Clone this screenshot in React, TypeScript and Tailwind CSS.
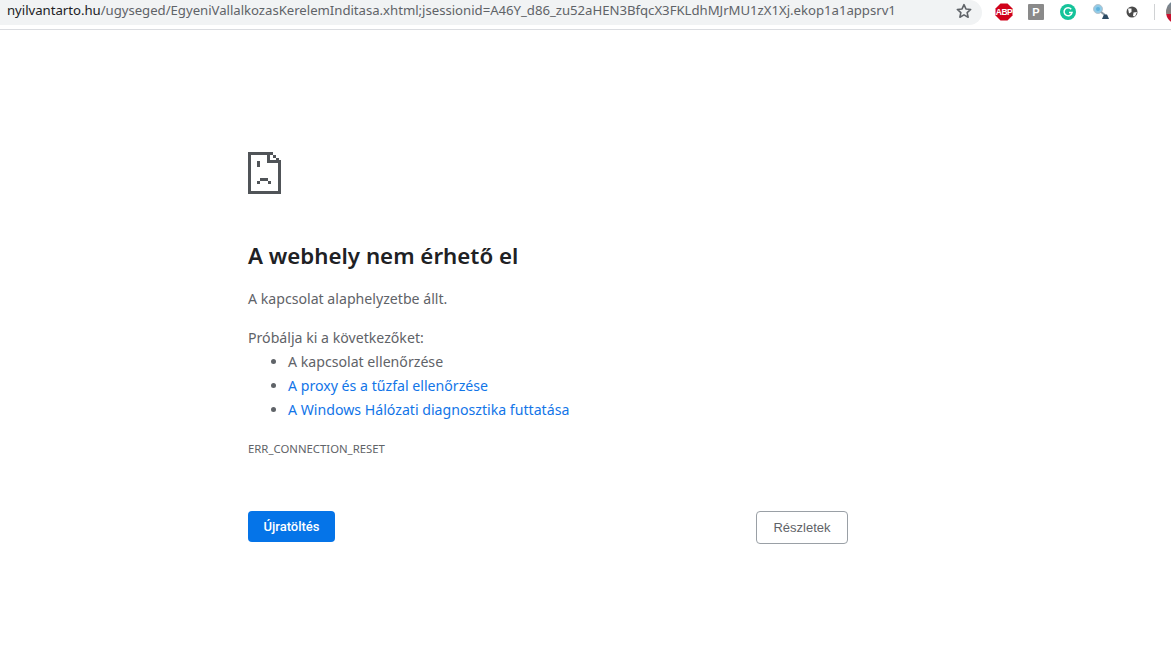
import React from "react";

const font = "font-['Noto_Sans','Open_Sans',sans-serif]";

function SadTab() {
  // pixel style sad page icon, 33x42 box
  return (
    <svg width="33" height="42" viewBox="0 0 33 42" fill="#505458" shapeRendering="crispEdges">
      <path d="M0 0H25V3H28V6H31V8H33V42H0ZM3 3V39H30V11H19V3ZM22 3V8H28V6H25V3Z" fillRule="evenodd" />
      <rect x="9" y="9" width="3" height="6" />
      <rect x="12" y="26" width="8" height="3" />
      <rect x="9" y="29" width="3" height="3" />
      <rect x="20" y="29" width="3" height="3" />
    </svg>
  );
}

function Extensions() {
  return (
    <div className="flex items-center">
      <svg width="18" height="18" viewBox="0 0 18 18" className="ml-[13px]">
        <path d="M5.5 0.5H12.5L17.5 5.5V12.5L12.5 17.5H5.5L0.5 12.5V5.5Z" fill="#d0021b" />
        <text x="9" y="12" textAnchor="middle" fontSize="8.5" fontWeight="700" letterSpacing="-0.5" fill="#fff" fontFamily="Liberation Sans">
          ABP
        </text>
      </svg>
      <div className="ml-[15px] flex h-4 w-4 items-center justify-center rounded-[1px] bg-[#8a8a8a] font-['Liberation_Sans',sans-serif] text-[11px] font-bold text-white">
        P
      </div>
      <svg width="16" height="16" viewBox="0 0 16 16" className="ml-4">
        <circle cx="8" cy="8" r="8" fill="#15c39a" />
        <path d="M11.2 5.2A4 4 0 1 0 12 8.6H9" fill="none" stroke="#fff" strokeWidth="1.5" />
      </svg>
      <svg width="18" height="18" viewBox="0 0 18 18" className="ml-4">
        <circle cx="6" cy="6" r="4.5" fill="#8fcbe8" stroke="#b9c4cc" />
        <circle cx="6" cy="6" r="2" fill="#5fb2dc" />
        <path d="M9 9L13 12" stroke="#8a9aa5" strokeWidth="2" />
        <path d="M10 16L12 11.5H15L17 16Z" fill="#2c4a63" />
      </svg>
      <svg width="12" height="12" viewBox="0 0 12 12" className="ml-4">
        <circle cx="6" cy="6" r="5.5" fill="#4a4a4a" />
        <path d="M2 2.5L5.5 2.5L5.5 6L3 7.5ZM7.5 6.5L11 6L9 10.5L7 10Z" fill="#fff" />
      </svg>
      <div className="ml-4 h-4 w-px bg-[#d0d2d4]" />
      <div className="ml-[11px] h-[24px] w-[5px] overflow-hidden">
        <div className="h-[24px] w-[24px] rounded-full bg-[linear-gradient(180deg,#6f8a9c_0%,#8a7c78_60%,#c8102e_60%,#c8102e_100%)]" />
      </div>
    </div>
  );
}

export default function App() {
  return (
    <div className={`flex h-[654px] w-[1171px] flex-col overflow-hidden bg-white ${font}`}>
      <div className="flex h-[30px] shrink-0 items-start border-b border-[#dadce0] bg-white">
        <div className="flex h-[25px] w-[982px] shrink-0 items-center justify-between rounded-br-[13px] rounded-tr-[13px] bg-[#f1f3f4] pb-[3px] pl-[7px] pr-[10px] text-[13.2px] tracking-[-0.03px] text-[#5f6368]">
          <div className="whitespace-nowrap">
            <span className="text-[#202124]">nyilvantarto.hu</span>
            /ugyseged/EgyeniVallalkozasKerelemInditasa.xhtml;jsessionid=A46Y_d86_zu52aHEN3BfqcX3FKLdhMJrMU1zX1Xj.ekop1a1appsrv1
          </div>
          <svg width="16" height="16" viewBox="0 0 24 24" fill="none" stroke="#5f6368" strokeWidth="2.4" strokeLinejoin="round">
            <path d="M12 2.5L14.9 8.9L22 9.7L16.7 14.4L18.2 21.3L12 17.8L5.8 21.3L7.3 14.4L2 9.7L9.1 8.9Z" />
          </svg>
        </div>
        <Extensions />
      </div>

      <div className="ml-[248px] flex w-[600px] flex-col pt-[122px]">
        <SadTab />
        <h1 className="mt-[47px] text-[22.3px] leading-[30px] font-semibold text-[#202124]">A webhely nem érhető el</h1>
        <p className="mt-[16px] text-[14.15px] leading-[24px] text-[#5f6368]">A kapcsolat alaphelyzetbe állt.</p>
        <p className="mt-[15px] text-[14.15px] leading-[24px] text-[#5f6368]">Próbálja ki a következőket:</p>
        <ul className="list-disc pl-10 text-[14.15px] leading-[24px] text-[#5f6368]">
          <li>A kapcsolat ellenőrzése</li>
          <li>
            <a className="text-[#1275e8]">A proxy és a tűzfal ellenőrzése</a>
          </li>
          <li>
            <a className="text-[#1275e8]">A Windows Hálózati diagnosztika futtatása</a>
          </li>
        </ul>
        <div className="mt-[19px] text-[11.35px] leading-[16px] text-[#5f6368]">ERR_CONNECTION_RESET</div>
        <div className="mt-[54px] flex items-start justify-between text-[13px]">
          <button className="h-[31px] w-[87px] rounded-[4px] bg-[#0574e8] font-['Roboto',sans-serif] font-medium text-white">Újratöltés</button>
          <button className="h-[33px] w-[92px] rounded-[4px] border border-[#9aa0a6] bg-white font-['Liberation_Sans',sans-serif] text-[#5f6368]">Részletek</button>
        </div>
      </div>
    </div>
  );
}
